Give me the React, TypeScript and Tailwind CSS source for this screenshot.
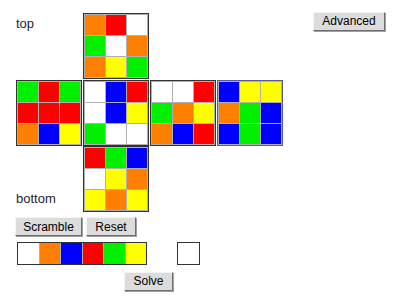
import React from 'react';

const C: Record<string, string> = {
  w: '#ffffff',
  o: '#ff8000',
  r: '#ff0000',
  g: '#00f000',
  b: '#0000ff',
  y: '#ffff00',
};

const faces: Record<string, string> = {
  top: 'orwgwooyg',
  left: 'grgrrroby',
  front: 'wbrwbygww',
  right: 'wwrgoyobr',
  back: 'byyogbbgb',
  bottom: 'rgbwyoyoy',
};

function Face({ cells, active = false }: { cells: string; active?: boolean }) {
  return (
    <div
      className={`grid grid-cols-3 gap-px p-px w-[66px] h-[66px] shrink-0 border bg-[#b0b0b0] ${
        active ? 'border-[#5a5aa0] bg-[#9090c8]' : 'border-[#333333]'
      }`}
    >
      {cells.split('').map((c, i) => (
        <div key={i} style={{ backgroundColor: C[c] }} />
      ))}
    </div>
  );
}

function Btn({ children, className = '' }: { children: React.ReactNode; className?: string }) {
  return (
    <button
      className={`h-[19px] bg-[#dcdcdc] border border-t-[#f4f4f4] border-l-[#f4f4f4] border-r-[#6e6e6e] border-b-[#6e6e6e] shadow-[1px_1px_0_#a0a0a0] text-[12px] leading-none text-black ${className}`}
    >
      {children}
    </button>
  );
}

export default function App() {
  return (
    <div
      className="w-[400px] h-[300px] bg-white text-[13px] text-[#1e1e32] relative"
      style={{ fontFamily: '"Liberation Sans", Arial, sans-serif' }}
    >
      <div className="pl-4 pt-[13px] flex flex-col">
        <div className="flex">
          <div className="w-[66px] pt-px">top</div>
          <div className="ml-px">
            <Face cells={faces.top} />
          </div>
          <div className="ml-auto mr-[15px] -mt-[2px]">
            <Btn className="w-[72px]">Advanced</Btn>
          </div>
        </div>
        <div className="flex gap-px mt-px">
          <Face cells={faces.left} />
          <Face cells={faces.front} />
          <Face cells={faces.right} />
          <Face cells={faces.back} active />
        </div>
        <div className="flex">
          <div className="w-[66px] flex items-end pb-[4px]">bottom</div>
          <div className="ml-px">
            <Face cells={faces.bottom} />
          </div>
        </div>
        <div className="flex gap-1 mt-[5px] -ml-px">
          <Btn className="w-[67px]">Scramble</Btn>
          <Btn className="w-[50px]">Reset</Btn>
        </div>
        <div className="flex items-center mt-[6px] ml-px">
          <div className="flex w-[130px] h-[23px] border border-[#333333] bg-[#b0b0b0] gap-px">
            {'wobrgy'.split('').map((c) => (
              <div key={c} className="flex-1" style={{ backgroundColor: C[c] }} />
            ))}
          </div>
          <div className="ml-[30px] w-[23px] h-[23px] border border-[#333333] bg-white" />
        </div>
        <div className="mt-[6px] ml-[108px]">
          <Btn className="w-[49px]">Solve</Btn>
        </div>
      </div>
    </div>
  );
}
